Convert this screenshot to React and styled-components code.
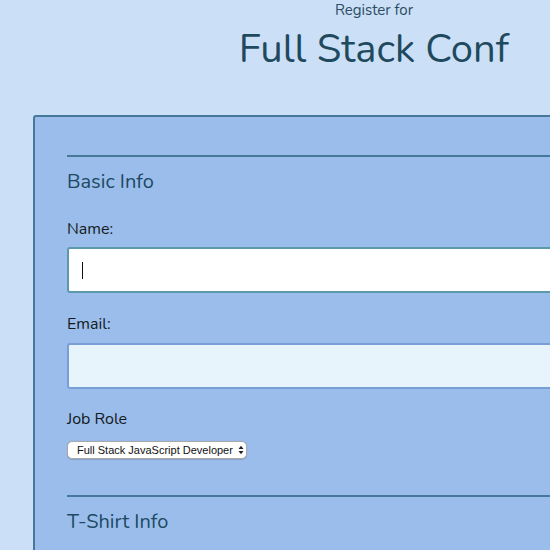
import React from "react";
import styled, { createGlobalStyle } from "styled-components";

const Global = createGlobalStyle`
  html, body { margin: 0; padding: 0; background: #cbdff7; overflow: hidden; }
  body { font-family: "Nunito", Lato, "Open Sans", sans-serif; }
  * { box-sizing: border-box; }
`;

const Page = styled.div`
  width: 748px;
  display: flex;
  flex-direction: column;
`;

const Header = styled.header`
  display: flex;
  flex-direction: column;
  align-items: center;
  color: #1f4a5e;
`;

const Kicker = styled.div`
  font-size: 15px;
  line-height: 20px;
  color: #2b4d62;
`;

const Title = styled.h1`
  margin: 5px 0 0;
  font-size: 40px;
  line-height: 48px;
  font-weight: 400;
  color: #1f4a5e;
`;

const Card = styled.form`
  margin: 42px 33px 0;
  background: #9bbdeb;
  border: 2px solid #46789b;
  border-radius: 3px;
  padding: 38px 32px 40px;
  display: flex;
  flex-direction: column;
`;

const Rule = styled.div`
  height: 2px;
  background: #46789b;
  margin-top: ${(p) => p.$top || 0}px;
`;

const Legend = styled.h2`
  margin: 13px 0 0;
  font-size: 20px;
  line-height: 24px;
  font-weight: 400;
  color: #1d4a63;
`;

const Label = styled.label`
  margin-top: ${(p) => p.$top}px;
  margin-bottom: ${(p) => p.$bottom}px;
  font-size: 16px;
  line-height: 20px;
  color: #141a20;
`;

const Field = styled.div`
  position: relative;
  display: flex;
`;

const TextInput = styled.input`
  width: 100%;
  height: 46px;
  border: 2px solid ${(p) => (p.$focused ? "#5c9aab" : "#779fd6")};
  background: ${(p) => (p.$focused ? "#ffffff" : "#e8f4fb")};
  border-radius: 3px;
  padding: 0 14px;
  font-size: 16px;
  font-family: inherit;
  outline: none;
  caret-color: transparent;
`;

const Caret = styled.span`
  position: absolute;
  left: 15px;
  top: 15px;
  width: 1px;
  height: 17px;
  background: #111;
`;

const SelectWrap = styled.div`
  position: relative;
  display: flex;
  align-self: flex-start;
`;

const Select = styled.select`
  appearance: none;
  -webkit-appearance: none;
  width: 180px;
  height: 18px;
  border: 1px solid #a8a8a8;
  border-radius: 5px;
  background: #fff;
  padding: 0 9px 0 9px;
  font-family: "Liberation Sans", Arial, sans-serif;
  font-size: 11px;
  line-height: 16px;
  color: #111;
  box-shadow: 0 0.5px 1px rgba(0, 0, 0, 0.15);
  outline: none;
`;

const Arrows = styled.svg`
  position: absolute;
  right: 3px;
  top: 4px;
  pointer-events: none;
`;

export default function App() {
  return (
    <>
      <Global />
      <Page>
        <Header>
          <Kicker>Register for</Kicker>
          <Title>Full Stack Conf</Title>
        </Header>
        <Card onSubmit={(e) => e.preventDefault()}>
          <Rule />
          <Legend>Basic Info</Legend>
          <Label $top={25} $bottom={8} htmlFor="name">Name:</Label>
          <Field>
            <TextInput id="name" type="text" $focused />
            <Caret />
          </Field>
          <Label $top={21} $bottom={9} htmlFor="mail">Email:</Label>
          <Field>
            <TextInput id="mail" type="email" />
          </Field>
          <Label $top={20} $bottom={12} htmlFor="title">Job Role</Label>
          <SelectWrap>
            <Select id="title" defaultValue="full-stack js developer">
              <option value="full-stack js developer">Full Stack JavaScript Developer</option>
              <option value="front-end developer">Front End Developer</option>
              <option value="back-end developer">Back End Developer</option>
              <option value="designer">Designer</option>
              <option value="student">Student</option>
              <option value="other">Other</option>
            </Select>
            <Arrows width="6" height="10" viewBox="0 0 6 10">
              <path d="M0.5 4 L3 0.8 L5.5 4 Z" fill="#222" />
              <path d="M0.5 6 L3 9.2 L5.5 6 Z" fill="#222" />
            </Arrows>
          </SelectWrap>
          <Rule $top={36} />
          <Legend>T-Shirt Info</Legend>
        </Card>
      </Page>
    </>
  );
}
